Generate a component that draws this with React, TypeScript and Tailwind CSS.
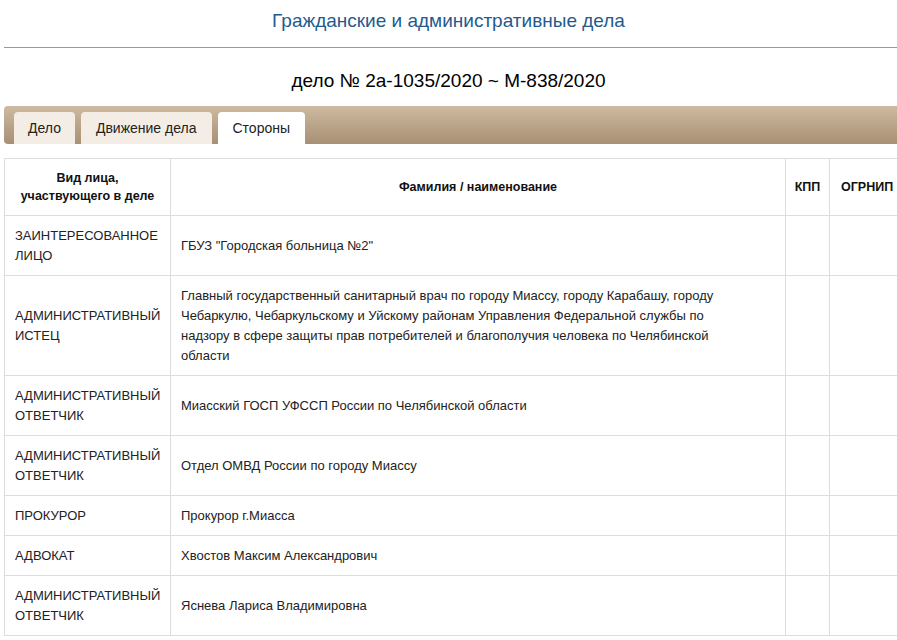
export default function App() {
  const rows: [string, string, number][] = [
    ["ЗАИНТЕРЕСОВАННОЕ ЛИЦО", 'ГБУЗ "Городская больница №2"', 60],
    ["АДМИНИСТРАТИВНЫЙ ИСТЕЦ", "Главный государственный санитарный врач по городу Миассу, городу Карабашу, городу Чебаркулю, Чебаркульскому и Уйскому районам Управления Федеральной службы по надзору в сфере защиты прав потребителей и благополучия человека по Челябинской области", 100],
    ["АДМИНИСТРАТИВНЫЙ ОТВЕТЧИК", "Миасский ГОСП УФССП России по Челябинской области", 60],
    ["АДМИНИСТРАТИВНЫЙ ОТВЕТЧИК", "Отдел ОМВД России по городу Миассу", 60],
    ["ПРОКУРОР", "Прокурор г.Миасса", 40],
    ["АДВОКАТ", "Хвостов Максим Александрович", 40],
    ["АДМИНИСТРАТИВНЫЙ ОТВЕТЧИК", "Яснева Лариса Владимировна", 60],
  ];
  return (
    <div className="w-[897px] h-[640px] overflow-hidden bg-white text-[#333]" style={{ fontFamily: "'Liberation Sans', Arial, sans-serif" }}>
      <div className="h-[47px] flex items-center justify-center text-[19px] text-[#1f5b8e] pb-[4px]">Гражданские и административные дела</div>
      <div className="ml-[4px] h-px bg-[#999]" />
      <div className="h-[58px] flex items-center justify-center text-[19px] text-black pt-[8px]">дело № 2а-1035/2020 ~ М-838/2020</div>
      <div className="ml-[4px] w-[900px] h-[38px] rounded-l-[4px] bg-gradient-to-b from-[#cdbaa0] to-[#a89074] flex items-end gap-[6px] pl-[10px]">
        <div className="h-[32px] px-[14px] flex items-center rounded-t-[4px] bg-[#f3ede5] text-[14px] text-[#222]">Дело</div>
        <div className="h-[32px] px-[15px] flex items-center rounded-t-[4px] bg-[#f3ede5] text-[14px] text-[#222]">Движение дела</div>
        <div className="h-[32px] px-[15px] flex items-center rounded-t-[4px] bg-white text-[14px] text-[#222]">Стороны</div>
      </div>
      <table className="ml-[4px] mt-[14px] w-[905px] border-collapse text-[13px] leading-[20px] text-[#222]" style={{ tableLayout: "fixed" }}>
        <colgroup>
          <col style={{ width: 166 }} />
          <col style={{ width: 615 }} />
          <col style={{ width: 44 }} />
          <col style={{ width: 80 }} />
        </colgroup>
        <thead>
          <tr className="h-[57px] text-[12.5px] font-bold text-[#111] leading-[18px]">
            <th className="border border-[#ddd] px-[4px]">Вид лица,<br />участвующего в деле</th>
            <th className="border border-[#ddd]">Фамилия / наименование</th>
            <th className="border border-[#ddd]">КПП</th>
            <th className="border border-[#ddd] text-left pl-[11px]">ОГРНИП</th>
          </tr>
        </thead>
        <tbody>
          {rows.map(([a, b, h], i) => (
            <tr key={i} style={{ height: h }}>
              <td className="border border-[#ddd] px-[10px] align-middle">{a}</td>
              <td className="border border-[#ddd] pl-[10px] pr-[30px] align-middle">{b}</td>
              <td className="border border-[#ddd]"></td>
              <td className="border border-[#ddd]"></td>
            </tr>
          ))}
        </tbody>
      </table>
    </div>
  );
}
